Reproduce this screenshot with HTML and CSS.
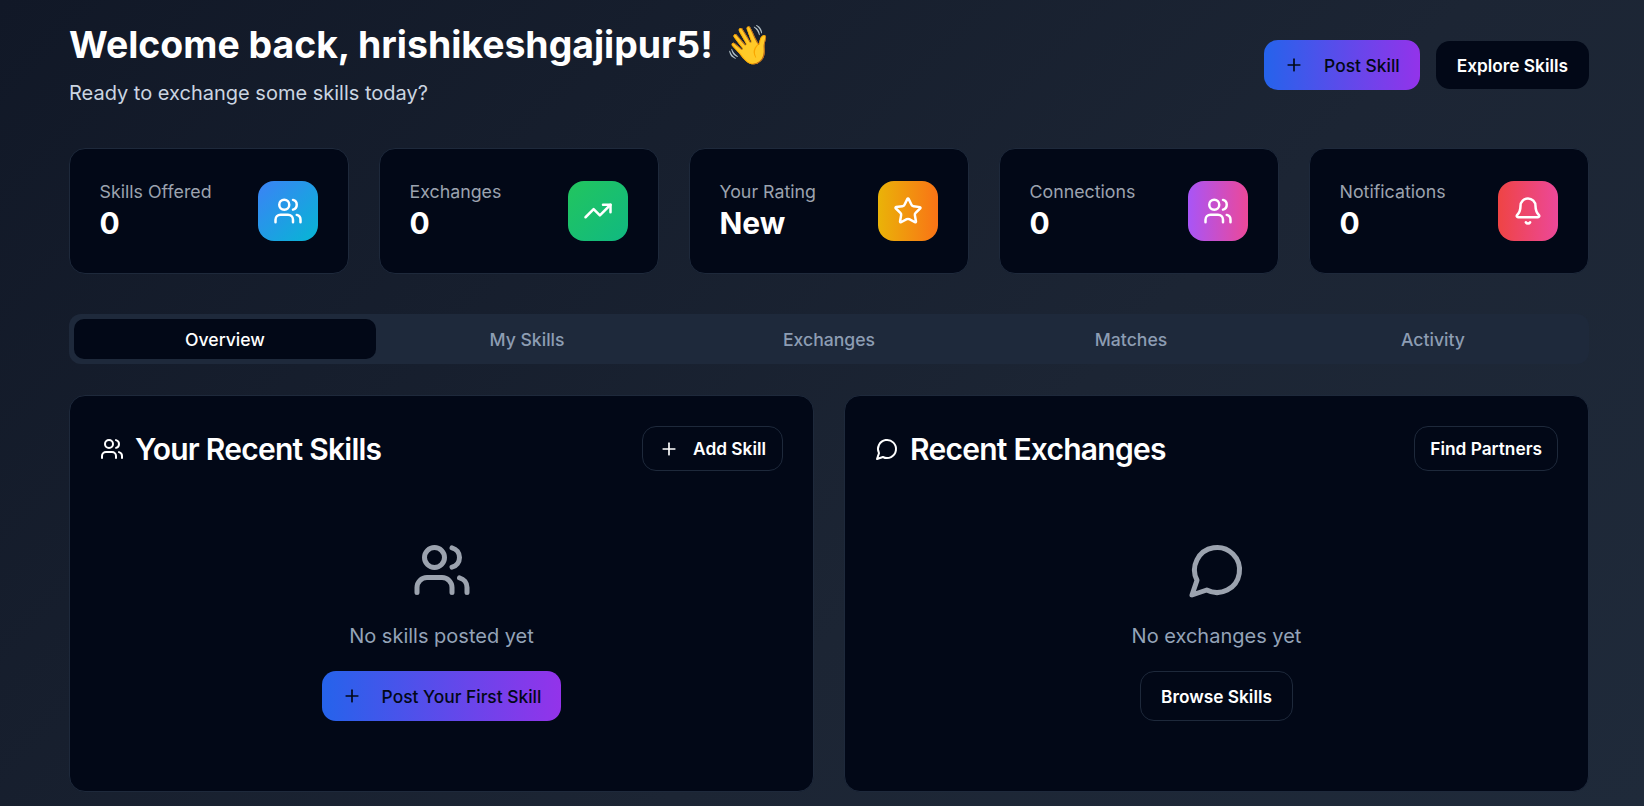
FILE: index.html
```html
<!DOCTYPE html>
<html lang="en">
<head>
<meta charset="utf-8">
<title>Dashboard</title>
<link rel="stylesheet" href="styles.css">
</head>
<body>
<svg class="defs" width="0" height="0" aria-hidden="true">
  <symbol id="i-users" viewBox="0 0 24 24"><path d="M16 21v-2a4 4 0 0 0-4-4H6a4 4 0 0 0-4 4v2"/><path d="M16 3.128a4 4 0 0 1 0 7.744"/><path d="M22 21v-2a4 4 0 0 0-3-3.87"/><circle cx="9" cy="7" r="4"/></symbol>
  <symbol id="i-plus" viewBox="0 0 24 24"><path d="M5 12h14"/><path d="M12 5v14"/></symbol>
  <symbol id="i-trend" viewBox="0 0 24 24"><path d="M16 7h6v6"/><path d="m22 7-8.5 8.5-5-5L2 17"/></symbol>
  <symbol id="i-star" viewBox="0 0 24 24"><path d="M11.525 2.295a.53.53 0 0 1 .95 0l2.31 4.679a2.123 2.123 0 0 0 1.595 1.16l5.166.756a.53.53 0 0 1 .294.904l-3.736 3.638a2.123 2.123 0 0 0-.611 1.878l.882 5.14a.53.53 0 0 1-.771.56l-4.618-2.428a2.122 2.122 0 0 0-1.973 0L6.396 21.01a.53.53 0 0 1-.77-.56l.881-5.139a2.122 2.122 0 0 0-.611-1.879L2.16 9.795a.53.53 0 0 1 .294-.906l5.165-.755a2.122 2.122 0 0 0 1.597-1.16z"/></symbol>
  <symbol id="i-bell" viewBox="0 0 24 24"><path d="M10.268 21a2 2 0 0 0 3.464 0"/><path d="M3.262 15.326A1 1 0 0 0 4 17h16a1 1 0 0 0 .74-1.673C19.41 13.956 18 12.499 18 8A6 6 0 0 0 6 8c0 4.499-1.411 5.956-2.738 7.326"/></symbol>
  <symbol id="i-chat" viewBox="0 0 24 24"><path d="M7.9 20A9 9 0 1 0 4 16.1L2 22Z"/></symbol>
</svg>
<main class="page">
  <header class="top">
    <div>
      <h1 class="welcome">Welcome back, hrishikeshgajipur5! <span class="wave">👋</span></h1>
      <p class="sub">Ready to exchange some skills today?</p>
    </div>
    <div class="top-actions">
      <button class="btn btn-grad"><svg class="ic20"><use href="#i-plus"/></svg>Post Skill</button>
      <button class="btn btn-dark">Explore Skills</button>
    </div>
  </header>

  <section class="stats">
    <div class="stat">
      <div><div class="stat-label">Skills Offered</div><div class="stat-value">0</div></div>
      <div class="stat-icon g-blue"><svg class="ic30"><use href="#i-users"/></svg></div>
    </div>
    <div class="stat">
      <div><div class="stat-label">Exchanges</div><div class="stat-value">0</div></div>
      <div class="stat-icon g-green"><svg class="ic30"><use href="#i-trend"/></svg></div>
    </div>
    <div class="stat">
      <div><div class="stat-label">Your Rating</div><div class="stat-value">New</div></div>
      <div class="stat-icon g-amber"><svg class="ic30"><use href="#i-star"/></svg></div>
    </div>
    <div class="stat">
      <div><div class="stat-label">Connections</div><div class="stat-value">0</div></div>
      <div class="stat-icon g-purple"><svg class="ic30"><use href="#i-users"/></svg></div>
    </div>
    <div class="stat">
      <div><div class="stat-label">Notifications</div><div class="stat-value">0</div></div>
      <div class="stat-icon g-red"><svg class="ic30"><use href="#i-bell"/></svg></div>
    </div>
  </section>

  <nav class="tabs">
    <div class="tab active">Overview</div>
    <div class="tab">My Skills</div>
    <div class="tab">Exchanges</div>
    <div class="tab">Matches</div>
    <div class="tab">Activity</div>
  </nav>

  <section class="panels">
    <article class="panel">
      <div class="panel-head">
        <h2 class="panel-title"><svg class="ic24"><use href="#i-users"/></svg>Your Recent Skills</h2>
        <button class="btn btn-outline btn-small"><svg class="ic20"><use href="#i-plus"/></svg>Add Skill</button>
      </div>
      <div class="empty">
        <svg class="ic60"><use href="#i-users"/></svg>
        <p class="empty-text">No skills posted yet</p>
        <button class="btn btn-grad"><svg class="ic20"><use href="#i-plus"/></svg>Post Your First Skill</button>
      </div>
    </article>
    <article class="panel">
      <div class="panel-head">
        <h2 class="panel-title"><svg class="ic24"><use href="#i-chat"/></svg>Recent Exchanges</h2>
        <button class="btn btn-outline btn-small">Find Partners</button>
      </div>
      <div class="empty">
        <svg class="ic60"><use href="#i-chat"/></svg>
        <p class="empty-text">No exchanges yet</p>
        <button class="btn btn-outline">Browse Skills</button>
      </div>
    </article>
  </section>
</main>
</body>
</html>
```
FILE: styles.css
```css
* { box-sizing: border-box; }
html, body { margin: 0; height: 100%; }
body {
  background: linear-gradient(135deg, #111827 0%, #1c2534 60%, #1f2a3a 100%);
  color: #f8fafc;
  font-family: Inter, "Noto Sans", sans-serif;
  overflow: hidden;
}
.defs { position: absolute; }
svg { fill: none; stroke: currentColor; stroke-width: 2; stroke-linecap: round; stroke-linejoin: round; flex: none; }
.ic20 { width: 20px; height: 20px; }
.ic24 { width: 24px; height: 24px; }
.ic30 { width: 30px; height: 30px; }
.ic60 { width: 60px; height: 60px; color: #9ca3af; }

.page { padding: 25px 55px 0 69px; }

.top { display: flex; justify-content: space-between; align-items: center; }
.welcome { margin: 0; font-size: 37.4px; line-height: 40px; font-weight: 700; color: #fff; }
.wave { font-size: 38px; line-height: 0; margin-left: 3px; }
.sub { margin: 14px 0 0; font-size: 20px; line-height: 28px; color: #cbd5e1; }
.top-actions { display: flex; align-items: center; gap: 16px; margin-bottom: 2px; }

.btn {
  display: inline-flex; align-items: center; justify-content: center;
  height: 50px; padding: 0 20px; border-radius: 14px; border: 0;
  font-family: inherit; font-size: 17.3px; font-weight: 500; color: #fff; cursor: pointer;
}
.btn-grad { background: linear-gradient(90deg, #2563eb, #9333ea); color: #020817; gap: 20px; font-size: 17.4px; }
.btn-dark { background: #020817; height: 48px; padding: 0 21px; font-weight: 600; }
.btn-outline { background: #020817; border: 1px solid #1e293b; font-weight: 600; }
.btn-small { height: 45px; padding: 0 15px; gap: 14px; }
.btn-small:has(svg) { padding: 0 16px; }

.stats { display: grid; grid-template-columns: repeat(5, 1fr); gap: 30px; margin-top: 41px; }
.stat {
  display: flex; justify-content: space-between; align-items: flex-start;
  padding: 32px 30px 32px 29.5px; background: #020817; border: 1px solid #1e293b; border-radius: 16px;
}
.stat-label { font-size: 17.8px; line-height: 22px; margin-bottom: 3px; color: #9ca3af; }
.stat-value { font-size: 30px; line-height: 35px; font-weight: 700; color: #fff; }
.stat-icon {
  width: 60px; height: 60px; border-radius: 16px; color: #fff;
  display: flex; align-items: center; justify-content: center;
}
.g-blue { background: linear-gradient(135deg, #3b82f6, #06b6d4); }
.g-green { background: linear-gradient(135deg, #22c55e, #10b981); }
.g-amber { background: linear-gradient(90deg, #eab308, #f97316); }
.g-purple { background: linear-gradient(90deg, #a855f7, #ec4899); }
.g-red { background: linear-gradient(90deg, #ef4444, #ec4899); }

.tabs {
  display: grid; grid-template-columns: repeat(5, 1fr);
  margin-top: 40px; padding: 5px; background: #1e293b; border-radius: 12px;
}
.tab { height: 40px; padding-top: 1px; display: flex; align-items: center; justify-content: center; font-size: 17.6px; font-weight: 500; color: #8d9db3; border-radius: 10px; }
.tab.active { background: #020817; color: #fff; }

.panels { display: grid; grid-template-columns: 1fr 1fr; gap: 30px; margin-top: 31px; }
.panel { height: 397px; padding: 30px; background: #020817; border: 1px solid #1e293b; border-radius: 16px; }
.panel-head { display: flex; justify-content: space-between; align-items: center; }
.panel-title { margin: 0; display: flex; align-items: center; gap: 11px; font-size: 30px; line-height: 36px; font-weight: 600; color: #fff; letter-spacing: -0.75px; }
.empty { display: flex; flex-direction: column; align-items: center; margin-top: 69px; }
.empty-text { margin: 22px 0 0; font-size: 20px; line-height: 28px; color: #94a3b8; }
.empty .btn { margin-top: 21px; }
```
